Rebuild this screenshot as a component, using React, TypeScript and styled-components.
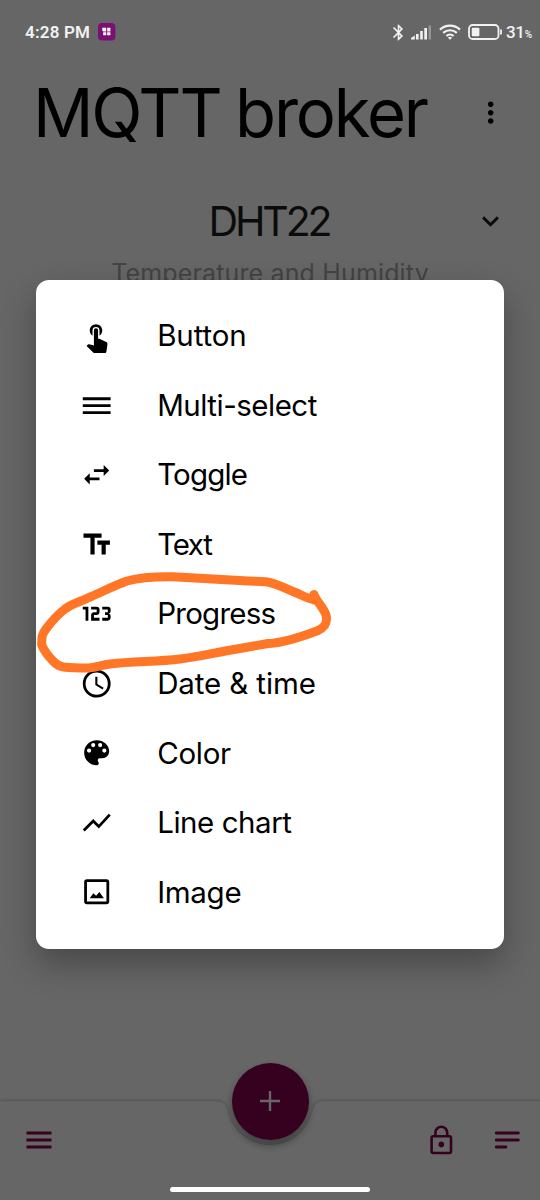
import React from 'react';
import styled, { createGlobalStyle } from 'styled-components';
import { MdTouchApp, MdSwapHoriz, MdTextFields, MdMoreVert, MdBluetooth } from 'react-icons/md';

const GlobalStyle = createGlobalStyle`
  html, body { margin: 0; padding: 0; background: #fff; }
  * { box-sizing: border-box; }
`;

const Screen = styled.div`
  position: relative;
  width: 540px;
  height: 1200px;
  overflow: hidden;
  display: flex;
  flex-direction: column;
  background: #fff;
  font-family: Inter, 'Liberation Sans', sans-serif;
`;

const TitleBar = styled.header`
  display: flex;
  align-items: center;
  justify-content: space-between;
  height: 98px;
  margin-top: 64px;
  padding: 0 33px 0 33px;
`;

const Title = styled.h1`
  margin: 0;
  font-size: 67px;
  line-height: 98px;
  font-weight: 400;
  letter-spacing: -2.2px;
  word-spacing: -2px;
  color: #000;
  white-space: nowrap;
`;

const GroupHeader = styled.section`
  display: grid;
  grid-template-columns: 33px 1fr 33px;
  align-items: center;
  padding: 0 33px;
  margin-top: 32px;
`;

const GroupName = styled.h2`
  margin: 0;
  grid-column: 2;
  text-align: center;
  font-size: 41px;
  line-height: 54px;
  font-weight: 400;
  letter-spacing: -3.1px;
  text-indent: -2px;
  color: #1c1c1c;
`;

const GroupNote = styled.p`
  margin: 9px 0 0;
  grid-column: 1 / -1;
  text-align: center;
  font-size: 25px;
  line-height: 32px;
  letter-spacing: 0.15px;
  color: #a8a8a8;
`;

const BottomBar = styled.nav`
  position: relative;
  display: flex;
  align-items: center;
  gap: 40px;
  height: 100px;
  margin-top: auto;
  padding: 0 19px 21px 25.5px;
  color: #870050;
`;

const BarShape = styled.svg`
  position: absolute;
  left: 0;
  top: -10px;
  filter: drop-shadow(0 -1px 1.5px rgba(0, 0, 0, 0.22));
`;

const BarIcon = styled.span<{ $push?: boolean }>`
  position: relative;
  display: flex;
  margin-left: ${(p) => (p.$push ? 'auto' : '0')};
`;

const AddButton = styled.button`
  position: absolute;
  left: 231.5px;
  top: -37.5px;
  width: 77px;
  height: 77px;
  padding: 0;
  border: 0;
  border-radius: 50%;
  display: flex;
  align-items: center;
  justify-content: center;
  color: #fff;
  background: #87004e;
  box-shadow: 0 5px 9px rgba(0, 0, 0, 0.4);
`;

const Scrim = styled.div`
  position: absolute;
  inset: 0;
  display: flex;
  flex-direction: column;
  background: rgba(0, 0, 0, 0.6);
`;

const StatusBar = styled.div`
  display: flex;
  align-items: center;
  height: 64px;
  padding: 0 8px 0 25px;
  color: #f2f2f2;
  font-family: Roboto, sans-serif;
`;

const Clock = styled.span`
  font-size: 17px;
  font-weight: 600;
  letter-spacing: 0.2px;
  margin-right: 8px;
`;

const StatusIcons = styled.div`
  display: flex;
  align-items: center;
  gap: 7px;
  margin-left: auto;
`;

const Radios = styled.div`
  display: flex;
  align-items: center;
  gap: 3px;
`;

const Charge = styled.span`
  font-size: 17px;
  font-weight: 500;
  letter-spacing: -0.2px;
  margin-left: -4px;
  small { font-size: 10px; }
`;

const Dialog = styled.div`
  width: 468px;
  height: 669px;
  margin: 215.5px auto 0;
  padding-top: 21.5px;
  border-radius: 13px;
  background: #fff;
  box-shadow: 0 15px 34px rgba(0, 0, 0, 0.3);
`;

const Option = styled.div`
  display: flex;
  align-items: center;
  height: 69.55px;
  padding-left: 43.8px;
  color: #000;
`;

const OptionIcon = styled.span<{ $drop?: number }>`
  display: flex;
  width: 33.4px;
  margin-right: 44px;
  padding-top: ${(p) => p.$drop ?? 0}px;
`;

const OptionLabel = styled.span<{ $track: number }>`
  font-size: 29.5px;
  line-height: 40px;
  margin-top: -1px;
  letter-spacing: ${(p) => p.$track}px;
  white-space: nowrap;
`;

const HomeHandle = styled.div`
  width: 200px;
  height: 5px;
  margin: auto auto 8.5px;
  border-radius: 3px;
  background: #fff;
`;

const Scribble = styled.svg`
  position: absolute;
  left: 0;
  top: 0;
  pointer-events: none;
`;

const S = 33.4;
const glyph = (d: string) => (
  <svg width={S} height={S} viewBox="0 0 24 24" fill="currentColor"><path d={d} /></svg>
);

const options: { label: string; track: number; icon: React.ReactNode; drop?: number }[] = [
  { label: 'Button', track: -0.15, drop: 1, icon: <MdTouchApp size={S} /> },
  { label: 'Multi-select', track: -0.5, icon: glyph('M2 6h20v2H2zM2 11h20v2H2zM2 16h20v2H2z') },
  { label: 'Toggle', track: -0.85, icon: <MdSwapHoriz size={S} /> },
  { label: 'Text', track: -1.3, icon: <MdTextFields size={S} /> },
  { label: 'Progress', track: -0.75, icon: glyph('M4,17V9H2V7H6V17H4M22,15C22,16.11 21.1,17 20,17H16V15H20V13H18V11H20V9H16V7H20A2,2 0 0,1 22,9V10.5A1.5,1.5 0 0,1 20.5,12A1.5,1.5 0 0,1 22,13.5V15M14,15V17H8V13C8,11.89 8.9,11 10,11H12V9H8V7H12A2,2 0 0,1 14,9V11C14,12.11 13.1,13 12,13H10V15H14Z') },
  { label: 'Date & time', track: -0.12, icon: glyph('M12,20A8,8 0 0,0 20,12A8,8 0 0,0 12,4A8,8 0 0,0 4,12A8,8 0 0,0 12,20M12,2A10,10 0 0,1 22,12A10,10 0 0,1 12,22C6.47,22 2,17.5 2,12A10,10 0 0,1 12,2M12.5,7V12.25L17,14.92L16.25,16.15L11,13V7H12.5Z') },
  { label: 'Color', track: -0.3, icon: glyph('M17.5,12A1.5,1.5 0 0,1 16,10.5A1.5,1.5 0 0,1 17.5,9A1.5,1.5 0 0,1 19,10.5A1.5,1.5 0 0,1 17.5,12M14.5,8A1.5,1.5 0 0,1 13,6.5A1.5,1.5 0 0,1 14.5,5A1.5,1.5 0 0,1 16,6.5A1.5,1.5 0 0,1 14.5,8M9.5,8A1.5,1.5 0 0,1 8,6.5A1.5,1.5 0 0,1 9.5,5A1.5,1.5 0 0,1 11,6.5A1.5,1.5 0 0,1 9.5,8M6.5,12A1.5,1.5 0 0,1 5,10.5A1.5,1.5 0 0,1 6.5,9A1.5,1.5 0 0,1 8,10.5A1.5,1.5 0 0,1 6.5,12M12,3A9,9 0 0,0 3,12A9,9 0 0,0 12,21A1.5,1.5 0 0,0 13.5,19.5C13.5,19.11 13.35,18.76 13.11,18.5C12.88,18.23 12.73,17.88 12.73,17.5A1.5,1.5 0 0,1 14.23,16H16A5,5 0 0,0 21,11C21,6.58 16.97,3 12,3Z') },
  {
    label: 'Line chart', track: -0.45,
    icon: (
      <svg width={S} height={S} viewBox="0 0 24 24" fill="none" stroke="currentColor" strokeWidth="2">
        <path d="M2.7 17.6 9.5 10.8 13.5 14.8 21.4 6.2" />
      </svg>
    ),
  },
  { label: 'Image', track: -0.3, icon: glyph('M19 19H5V5H19M19 3H5A2 2 0 0 0 3 5V19A2 2 0 0 0 5 21H19A2 2 0 0 0 21 19V5A2 2 0 0 0 19 3M13.9 12.2 11.6 15 9.6 13.2 7 16.8H17.2Z') },
];

const SignalIcon = () => (
  <svg width="21" height="16" viewBox="0 0 21 16" fill="currentColor">
    <path d="M0 15.5v-1.5l3.8-2.6v4.1zM5 10h2.6v5.5H5zM9.2 7h2.6v8.5H9.2zM13.3 4H16v11.5h-2.7z" />
    <path opacity=".35" d="M17.6 1.5h2.4v14h-2.4z" />
  </svg>
);

const WifiIcon = () => (
  <svg width="22" height="16" viewBox="0 0 22 16" fill="none" stroke="currentColor" strokeWidth="2.2">
    <path d="M1 5.6a14.5 14.5 0 0 1 20 0M4.2 8.9a10 10 0 0 1 13.6 0M7.4 12a5.3 5.3 0 0 1 7.2 0" />
    <path d="M11 15.8 8.9 13.7a3 3 0 0 1 4.2 0z" fill="currentColor" stroke="none" />
  </svg>
);

const BatteryIcon = () => (
  <svg width="35" height="16" viewBox="0 0 35 16" fill="none" stroke="currentColor">
    <rect x="1" y="1" width="29.5" height="14" rx="3.6" strokeWidth="1.8" />
    <rect x="3.8" y="3.8" width="7.6" height="8.4" rx="1" fill="currentColor" stroke="none" />
    <path d="M33 5.5v5" strokeWidth="1.8" />
  </svg>
);

export default function App() {
  return (
    <>
      <GlobalStyle />
      <Screen>
        <TitleBar>
          <Title>MQTT broker</Title>
          <MdMoreVert size={33.4} />
        </TitleBar>
        <GroupHeader>
          <GroupName>DHT22</GroupName>
          <svg width="33" height="33" viewBox="0 0 24 24" fill="none" stroke="#1c1c1c" strokeWidth="2.1">
            <path d="M6.6 9 12 14.3 17.4 9" />
          </svg>
          <GroupNote>Temperature and Humidity</GroupNote>
        </GroupHeader>
        <BottomBar>
          <BarShape width="540" height="110" viewBox="0 0 540 110">
            <path fill="#fff" d="M-5 11.2H216C222 11.2 225 13 227 19C232 41 249 55 270 55S308 41 313 19C315 13 318 11.2 324 11.2H545V115H-5Z" />
          </BarShape>
          <BarIcon>
            <svg width="26" height="18" viewBox="0 0 26 18" fill="currentColor">
              <path d="M0.5 .5h25v2.9h-25zM.5 7.5h25v2.9h-25zM.5 14.5h25v2.9h-25z" />
            </svg>
          </BarIcon>
          <BarIcon $push>
            <svg width="24" height="30" viewBox="0 0 24 30" fill="none" stroke="currentColor" strokeWidth="2.6">
              <rect x="1.6" y="11.2" width="19.4" height="16.8" rx="1.5" />
              <path d="M5.4 11.2V7.7a5.9 5.9 0 0 1 11.8 0v3.5" />
              <circle cx="11.3" cy="19.4" r="2.8" fill="currentColor" stroke="none" />
            </svg>
          </BarIcon>
          <BarIcon>
            <svg width="27" height="18" viewBox="0 0 27 18" stroke="currentColor" strokeWidth="2.8" strokeLinecap="round">
              <path d="M2.2 2h22.2M2.2 9h22.2M2.2 16h9.8" />
            </svg>
          </BarIcon>
          <AddButton aria-label="Add">
            <svg width="20" height="20" viewBox="0 0 20 20" stroke="currentColor" strokeWidth="2.4">
              <path d="M10 0v20M0 10h20" />
            </svg>
          </AddButton>
        </BottomBar>
        <Scrim>
          <StatusBar>
            <Clock>4:28 PM</Clock>
            <svg width="18" height="18" viewBox="0 0 18 18">
              <rect width="17.4" height="17.4" rx="4" fill="#7b0f75" />
              <path fill="#fff" d="M4.3 4.8h3.9v3.6H5.4q-1.1 0-1.1-1.1zM9.2 4.8h3.2v3.6H9.2zM5.2 9.3h3v3h-3zM9.2 9.3h3.2v3H9.2z" />
            </svg>
            <StatusIcons>
              <Radios>
                <MdBluetooth size={19} />
                <SignalIcon />
              </Radios>
              <WifiIcon />
              <BatteryIcon />
              <Charge>31<small>%</small></Charge>
            </StatusIcons>
          </StatusBar>
          <Dialog role="dialog">
            {options.map((o) => (
              <Option key={o.label}>
                <OptionIcon $drop={o.drop}>{o.icon}</OptionIcon>
                <OptionLabel $track={o.track}>{o.label}</OptionLabel>
              </Option>
            ))}
          </Dialog>
          <HomeHandle />
        </Scrim>
        <Scribble width="540" height="1200" viewBox="0 0 540 1200" fill="none" stroke="#ff7627" strokeWidth="9" strokeLinecap="round" strokeLinejoin="round">
          <path d="M315 600C308 599 302 595 293 591.5C284 588 276 583 266 581.8L248 581L173 576.8C155 576.5 142 577 127 581C113 586 102 592 90 597C80 602 71 604 65 609C57 615 52 621 46.7 628C42 634 41.7 636 41.7 645C45 653 50 658 54 662C60 668 64 667.5 86.7 668C94 668 101 665 110 664C135 661 156 662 180 659C200 657 217 652 237 649L268 643.5C285 643 302 636 317 631C324 628 328 624 326 615C324 608 316 601 314 594.5V600" />
        </Scribble>
      </Screen>
    </>
  );
}
